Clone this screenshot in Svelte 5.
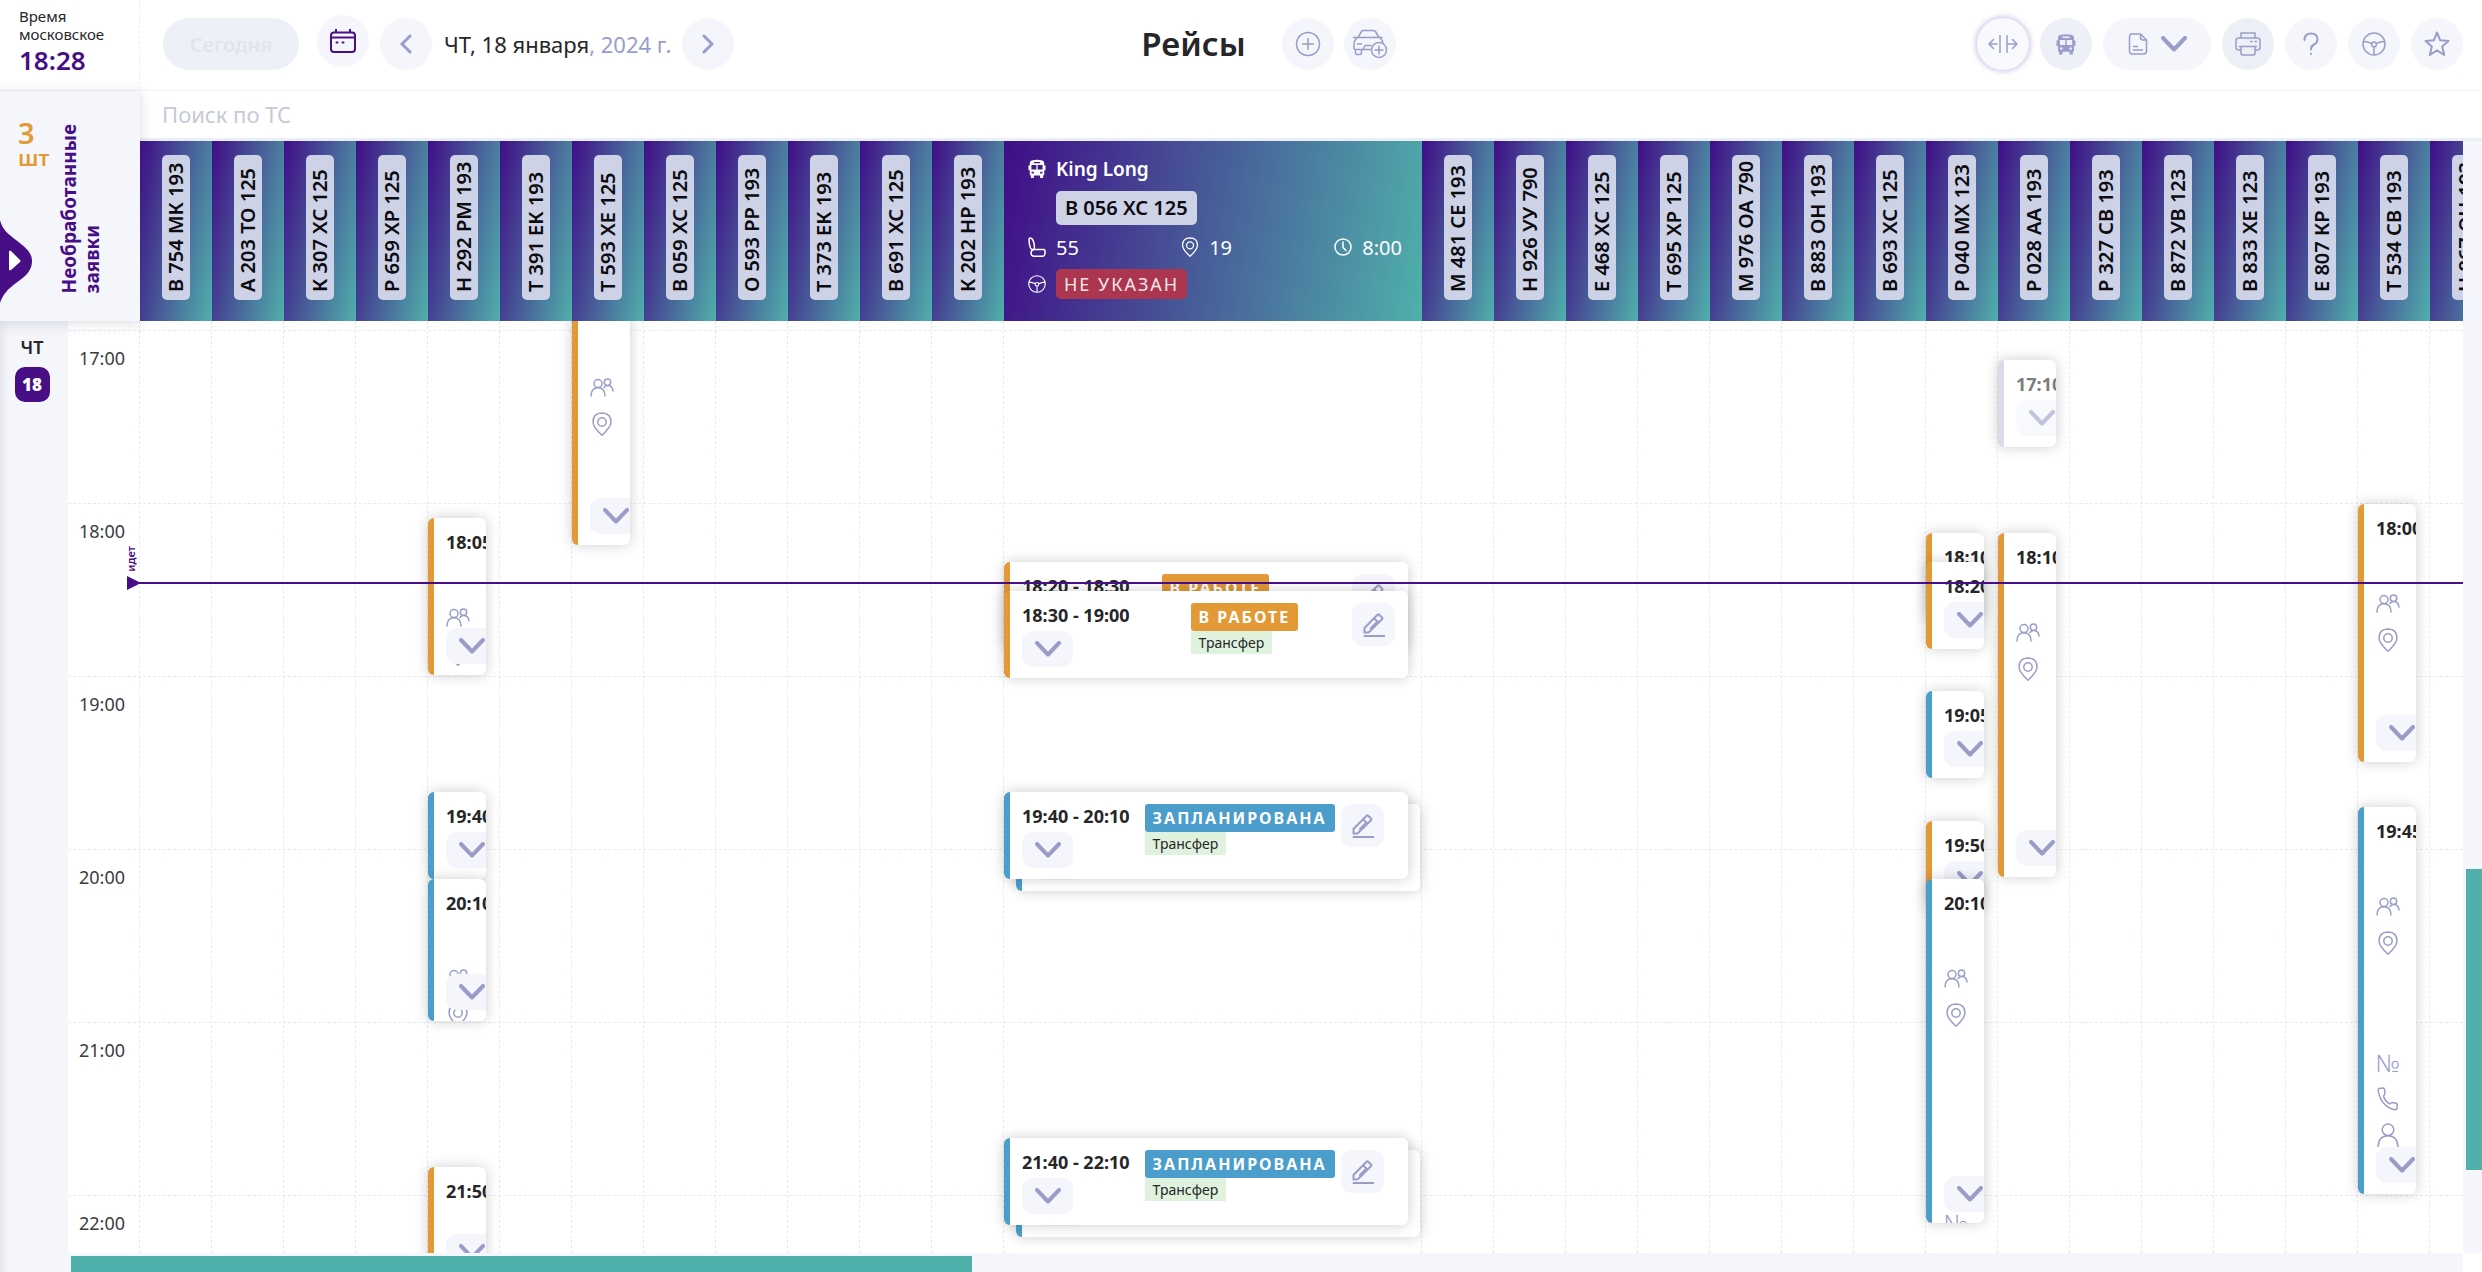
<script>
	const HOUR = 173;
	const FIRST_HOUR = 17;
	const OFFSET = 10;

	const hours = [17, 18, 19, 20, 21, 22];

	const vehicles = [
		{ plate: 'В 754 МК 193' },
		{ plate: 'А 203 ТО 125' },
		{ plate: 'К 307 ХС 125' },
		{ plate: 'Р 659 ХР 125' },
		{
			plate: 'Н 292 РМ 193',
			trips: [
				{ from: '18:05', to: '19:00', state: 'work', rows: ['people', 'pin'] },
				{ from: '19:40', to: '20:10', state: 'planned' },
				{ from: '20:10', to: '21:00', state: 'planned', rows: ['people', 'pin'] },
				{ from: '21:50', to: '22:30', state: 'work' }
			]
		},
		{ plate: 'Т 391 ЕК 193' },
		{
			plate: 'Т 593 ХЕ 125',
			trips: [{ from: '16:45', to: '18:15', state: 'work', rows: ['people', 'pin', 'number'], gap: 73 }]
		},
		{ plate: 'В 059 ХС 125' },
		{ plate: 'О 593 РР 193' },
		{ plate: 'Т 373 ЕК 193' },
		{ plate: 'В 691 ХС 125' },
		{ plate: 'К 202 НР 193' },
		{
			plate: 'В 056 ХС 125',
			open: true,
			model: 'King Long',
			seats: 55,
			stops: 19,
			hours: '8:00',
			trips: [
				{ from: '18:20', to: '18:30', state: 'work', lead: 32 },
				{ from: '18:30', to: '19:00', state: 'work', lead: 61 },
				{ from: '19:44', to: '20:14', state: 'planned', lead: 15, back: true },
				{ from: '19:40', to: '20:10', state: 'planned', lead: 15 },
				{ from: '21:44', to: '22:14', state: 'planned', lead: 15, back: true },
				{ from: '21:40', to: '22:10', state: 'planned', lead: 15 }
			]
		},
		{ plate: 'М 481 СЕ 193' },
		{ plate: 'Н 926 УУ 790' },
		{ plate: 'Е 468 ХС 125' },
		{ plate: 'Т 695 ХР 125' },
		{ plate: 'М 976 ОА 790' },
		{ plate: 'В 883 ОН 193' },
		{ plate: 'В 693 ХС 125' },
		{
			plate: 'Р 040 МХ 123',
			trips: [
				{ from: '18:10', to: '18:20', state: 'work' },
				{ from: '18:20', to: '18:50', state: 'work' },
				{ from: '19:05', to: '19:35', state: 'planned' },
				{ from: '19:50', to: '20:20', state: 'work' },
				{ from: '20:10', to: '22:10', state: 'planned', rows: ['people', 'pin', 'number'], gap: 184 }
			]
		},
		{
			plate: 'Р 028 АА 193',
			trips: [
				{ from: '17:10', to: '17:40', state: 'done' },
				{ from: '18:10', to: '20:10', state: 'work', rows: ['people', 'pin'] }
			]
		},
		{ plate: 'Р 327 СВ 193' },
		{ plate: 'В 872 УВ 123' },
		{ plate: 'В 833 ХЕ 123' },
		{ plate: 'Е 807 КР 193' },
		{
			plate: 'Т 534 СВ 193',
			trips: [
				{ from: '18:00', to: '19:30', state: 'work', rows: ['people', 'pin'] },
				{
					from: '19:45',
					to: '22:00',
					state: 'planned',
					rows: ['people', 'pin', 'number', 'phone', 'person'],
					gap: 96
				}
			]
		},
		{ plate: 'Н 867 ОН 193' }
	];

	const statuses = { work: 'В РАБОТЕ', planned: 'ЗАПЛАНИРОВАНА', done: 'ВЫПОЛНЕНА' };

	const icons = {
		calendar: {
			w: 26, h: 24,
			d: 'M4 3.5H22Q25 3.5 25 6.5V20Q25 23 22 23H4Q1 23 1 20V6.5Q1 3.5 4 3.5ZM1 8.5H25M6 .5V3.5M20 .5V3.5M6.5 13.5h1M12.5 13.5h1'
		},
		prev: { w: 12, h: 20, d: 'M10 2L2 10L10 18' },
		next: { w: 12, h: 20, d: 'M2 2L10 10L2 18' },
		plus: { w: 26, h: 26, d: 'M13 1.5a11.5 11.5 0 1 0 0 23a11.5 11.5 0 1 0 0-23M13 7.5v11M7.5 13h11' },
		car: {
			w: 36, h: 30,
			d: 'M6 8.5L9.5 2.5Q10.2 1.5 11.5 1.5H21.5Q22.8 1.5 23.5 2.5L27 8.5M1.5 8.5H30M5 9Q2 11.5 2 15V19.5Q2 20.5 3 20.5H11L12.5 17.5Q13 16.5 14 16.5H19M28 9Q30.5 11 31 13.5M3.5 20.5V23.5Q3.5 25.5 5.5 25.5H7.5Q9.5 25.5 9.5 23.5V20.5M5.5 15H9.5M27 13.5a7.5 7.5 0 1 0 0 15a7.5 7.5 0 1 0 0-15M27 17v8M23 21h8M11 20.5H19.5'
		},
		split: { w: 30, h: 18, d: 'M9 9H1M5.5 4.5L1 9L5.5 13.5M12 .5V17.5M19 .5V17.5M19 9H29M24.5 4.5L29 9L24.5 13.5' },
		bus: {
			w: 20, h: 21, fill: true,
			d: 'M4 1Q10-.6 16 1Q18 1.5 18 4V6.5H19.5V12H18V17.5H16.8V20.5H13.5V17.8H6.5V20.5H3.2V17.5H2V12H.5V6.5H2V4Q2 1.5 4 1ZM3.8 6V11H9.3V6ZM10.7 6V11H16.2V6ZM4 13.5V15.5H6.5V13.5ZM13.5 13.5V15.5H16V13.5ZM6.5 2.6V4H13.5V2.6Z'
		},
		doc: {
			w: 20, h: 22,
			d: 'M4 1H12.5L18.5 7V18Q18.5 21 15.5 21H4Q1.5 21 1.5 18V4Q1.5 1 4 1ZM12.5 1V4.5Q12.5 7 15 7H18.5M5.5 13.5H9.5M5.5 17H14.5'
		},
		chevron: { w: 26, h: 16, d: 'M2 2L13 13.5L24 2' },
		printer: {
			w: 26, h: 24,
			d: 'M6 6V1H20V6M5.5 18H3.5Q1 18 1 15.5V8.5Q1 6 3.5 6H22.5Q25 6 25 8.5V15.5Q25 18 22.5 18H20.5M4.5 14.5H21.5M6 14.5V21.5Q6 23 7.5 23H18.5Q20 23 20 21.5V14.5M15.5 9.5H17M20 9.5H21.5'
		},
		question: { w: 16, h: 24, d: 'M1.5 8Q1.5 1.5 8 1.5T14.5 7.5Q14.5 10.5 11 12.5Q8 14 8 17.5M8 21.7v.3' },
		wheel: {
			w: 24, h: 24,
			d: 'M12 1a11 11 0 1 0 0 22a11 11 0 1 0 0-22M12 10a2.4 2.4 0 1 0 0 4.8a2.4 2.4 0 1 0 0-4.8M1.5 9.5Q6 9.5 9.7 11.6M22.5 9.5Q18 9.5 14.3 11.6M12 14.8V23'
		},
		star: {
			w: 26, h: 26,
			d: 'M13 1.5L16.2 9.3L24.5 10L18.2 15.4L20.2 24L13 19.4L5.8 24L7.8 15.4L1.5 10L9.8 9.3Z'
		},
		people: {
			w: 24, h: 20,
			d: 'M8 1.5a4 4 0 1 0 0 8a4 4 0 1 0 0-8M1 18Q1.3 9.8 8 9.8T15 18M17.5 1a3.2 3.2 0 1 0 0 6.4a3.2 3.2 0 1 0 0-6.4M14 9.5Q15.5 7.5 17.5 7.5Q22.5 7.5 23 13'
		},
		pin: {
			w: 20, h: 24,
			d: 'M10 1Q19 1.3 19 10Q19 15 10 23.2Q1 15 1 10Q1 1.3 10 1ZM10 5.8a4.2 4.2 0 1 0 0 8.4a4.2 4.2 0 1 0 0-8.4'
		},
		phone: {
			w: 22, h: 24,
			d: 'M2 1.5L6 1Q7.5 1 7.5 2.5L8 6Q8 7.5 6.5 9Q8 14 12.5 17Q14 15.5 15.5 15.5L19.5 16.3Q20.5 16.8 20.3 18L19.8 21.5Q19.5 23 17.5 22.7Q11 21.5 6 15.5Q1.5 9 1.2 3Q1.2 1.8 2 1.5Z'
		},
		person: { w: 22, h: 24, d: 'M11 1a5.8 5.8 0 1 0 0 11.6a5.8 5.8 0 1 0 0-11.6M1 24Q1.5 12.8 11 12.8T21 24' },
		edit: {
			w: 22, h: 24,
			d: 'M1.5 19.5V15L14.5 1.7Q15.3 1 16.2 1.7L19 4.5Q19.8 5.3 19 6.2L6 19Q5.5 19.5 5 19.5ZM11 5.3L15.5 9.8M8 15L13 10M1.5 23H21.5'
		},
		seat: {
			w: 18, h: 20,
			d: 'M1 2Q1 1 2.5 1Q5 1.5 6 6.5Q7 11 5.5 12.5Q3.5 13 2.5 11Q1 7 1 2ZM6 12.5H16Q17.5 13 17 16L16.5 18Q16 19.2 15 19.2H6Q3 19 3 16Q3 13 6 12.5Z'
		},
		clock: { w: 18, h: 18, d: 'M9 1a8 8 0 1 0 0 16a8 8 0 1 0 0-16M9 4V9.5L12 12.5' }
	};

	let search = $state('');

	function minutes(time) {
		const [h, m] = time.split(':').map(Number);
		return h * 60 + m;
	}

	function top(time) {
		return Math.round(((minutes(time) - FIRST_HOUR * 60) * HOUR) / 60) + OFFSET;
	}

	function height(trip) {
		return Math.max(87, top(trip.to) - top(trip.from) - 2);
	}
</script>

{#snippet icon(name)}
	<svg
		class="icon icon-{name}"
		class:filled={icons[name].fill}
		width={icons[name].w}
		height={icons[name].h}
		viewBox="0 0 {icons[name].w} {icons[name].h}"
		aria-hidden="true"
	>
		<path d={icons[name].d} />
	</svg>
{/snippet}

<div class="page">
	<header class="topbar">
		<div class="clock">
			<span>Время московское</span>
			<strong>18:28</strong>
		</div>
		<nav class="dates">
			<button class="today" disabled>Сегодня</button>
			<button class="round calendar-button" aria-label="Календарь">{@render icon('calendar')}</button>
			<button class="round" aria-label="Назад">{@render icon('prev')}</button>
			<span class="date">ЧТ, 18 января<span class="year">, 2024 г.</span></span>
			<button class="round" aria-label="Вперед">{@render icon('next')}</button>
		</nav>
		<div class="heading">
			<h1>Рейсы</h1>
			<button class="round" aria-label="Добавить рейс">{@render icon('plus')}</button>
			<button class="round" aria-label="Добавить ТС">{@render icon('car')}</button>
		</div>
		<div class="tools">
			<button class="round ring" aria-label="Ширина колонок">{@render icon('split')}</button>
			<button class="round dark" aria-label="Транспорт">{@render icon('bus')}</button>
			<button class="round export" aria-label="Документы">
				{@render icon('doc')}
				{@render icon('chevron')}
			</button>
			<button class="round dark" aria-label="Печать">{@render icon('printer')}</button>
			<button class="round" aria-label="Помощь">{@render icon('question')}</button>
			<button class="round" aria-label="Водители">{@render icon('wheel')}</button>
			<button class="round" aria-label="Избранное">{@render icon('star')}</button>
		</div>
	</header>

	<section class="upper">
		<aside class="requests">
			<p class="count"><b>3</b>шт</p>
			<p class="caption">Необработанные<br />заявки</p>
			<button class="drawer" aria-label="Открыть заявки">
				<svg width="32" height="84" viewBox="0 0 32 84" aria-hidden="true">
					<path class="wave" d="M0 0C2 9 8 14 16 20C28 29 32 34 32 41C32 49 28 55 16 63C8 69 3 74 0 83Z" />
					<path class="arrow" d="M9 32Q9 30 11 31L20 40Q21 41 20 42L11 50Q9 51 9 49Z" />
				</svg>
			</button>
		</aside>
		<div class="fleet">
			<input class="search" type="text" aria-label="Поиск по ТС" placeholder="Поиск по ТС" bind:value={search} />
			<div class="vehicles">
				{#each vehicles as vehicle}
					{#if vehicle.open}
						<div class="vehicle open">
							<div class="line model">{@render icon('bus')}<span>{vehicle.model}</span></div>
							<div class="line"><span class="plate wide">{vehicle.plate}</span></div>
							<div class="line facts">
								<span class="fact">{@render icon('seat')}{vehicle.seats}</span>
								<span class="fact">{@render icon('pin')}{vehicle.stops}</span>
								<span class="fact">{@render icon('clock')}{vehicle.hours}</span>
							</div>
							<div class="line">{@render icon('wheel')}<span class="driver">НЕ УКАЗАН</span></div>
						</div>
					{:else}
						<div class="vehicle"><span class="plate">{vehicle.plate}</span></div>
					{/if}
				{/each}
			</div>
		</div>
	</section>

	<section class="schedule">
		<div class="day">
			<span>ЧТ</span>
			<b>18</b>
		</div>
		<div class="board">
			<div class="canvas">
				<ol class="hours">
					{#each hours as hour}
						<li>{hour}:00</li>
					{/each}
				</ol>
				<div class="columns">
					{#each vehicles as vehicle}
						<div class="column" class:open={vehicle.open}>
							{#each vehicle.trips ?? [] as trip}
								<article
									class="trip {trip.state}"
									class:back={trip.back}
									style="top: {top(trip.from)}px; height: {height(trip)}px"
								>
									<div class="trip-head">
										<span class="time">{trip.from} - {trip.to}</span>
										{#if vehicle.open}
											<div class="status" style="margin-left: {trip.lead}px">
												<span class="badge">{statuses[trip.state]}</span>
												<span class="kind">Трансфер</span>
											</div>
											<button class="edit-button" aria-label="Изменить">{@render icon('edit')}</button>
										{/if}
									</div>
									{#if trip.rows}
										<ul class="details">
											{#each trip.rows as row}
												<li style={row === 'number' ? `margin-top: ${trip.gap}px` : null}>
													{#if row === 'number'}
														<span class="number">№</span>
													{:else}
														{@render icon(row)}
													{/if}
												</li>
											{/each}
										</ul>
									{/if}
									<button class="more" aria-label="Подробнее">{@render icon('chevron')}</button>
								</article>
							{/each}
						</div>
					{/each}
				</div>
				<div class="now" style="top: {top('18:27')}px">
					<span>идет</span>
				</div>
			</div>
			<div class="track horizontal"><div class="thumb" style="width: 37.7%"></div></div>
		</div>
		<div class="track vertical"><div class="thumb" style="top: 58.8%; height: 32.3%"></div></div>
	</section>
</div>

<style>
	:global(body) {
		margin: 0;
	}

	.page {
		--purple: #480e86;
		--orange: #e39935;
		--blue: #4b9dcb;
		--teal: #4fb0ab;
		--icon: #999dc8;
		--soft: #f4f6fb;
		display: flex;
		flex-direction: column;
		height: 100vh;
		overflow: hidden;
		background: #fff;
		color: #262628;
		font-family: 'Noto Sans', sans-serif;
		font-size: 18px;
	}

	.page * {
		box-sizing: border-box;
	}

	button {
		padding: 0;
		border: 0;
		font: inherit;
		cursor: pointer;
	}

	h1,
	p,
	ol,
	ul {
		margin: 0;
		padding: 0;
		list-style: none;
	}

	.icon {
		flex: none;
		fill: none;
		stroke: currentColor;
		stroke-width: 1.5;
		stroke-linecap: round;
		stroke-linejoin: round;
	}

	.icon.filled {
		fill: currentColor;
		fill-rule: evenodd;
		stroke: none;
	}

	.icon-chevron {
		stroke-width: 4;
	}

	.icon-prev,
	.icon-next {
		stroke-width: 3;
	}

	.icon-star,
	.icon-question,
	.icon-edit,
	.icon-calendar {
		stroke-width: 2;
	}

	/* top bar */
	.topbar {
		display: flex;
		flex: none;
		align-items: center;
		height: 91px;
		padding-right: 19px;
		border-bottom: 1px solid #eff1f5;
	}

	.clock {
		display: flex;
		flex-direction: column;
		flex: none;
		align-self: stretch;
		width: 140px;
		padding: 7px 19px;
		border-right: 1px dashed #e9edf2;
		font-size: 15px;
		line-height: 18px;
	}

	.clock strong {
		color: var(--purple);
		font-size: 26px;
		font-weight: 600;
		line-height: 34px;
	}

	.dates,
	.heading,
	.tools {
		display: flex;
		align-items: center;
		height: 52px;
		margin-bottom: 2px;
	}

	.dates {
		flex: 7 0 auto;
		padding-left: 23px;
	}

	.heading {
		flex: 10 0 auto;
		gap: 10px;
	}

	.tools {
		gap: 11px;
	}

	.today {
		width: 136px;
		height: 52px;
		margin-right: 18px;
		border-radius: 26px;
		background: #edf0f6;
		color: #e1e5ee;
		font-size: 20px;
		font-weight: 600;
	}

	.round {
		display: flex;
		flex: none;
		align-items: center;
		justify-content: center;
		width: 52px;
		height: 52px;
		border-radius: 26px;
		background: var(--soft);
		color: var(--icon);
	}

	.round.dark {
		background: #edf0f7;
	}

	.ring {
		background: #f8f9fd;
		box-shadow: 0 0 5px 2px #d6cbe6;
	}

	.export {
		gap: 13px;
		width: 108px;
	}

	.calendar-button {
		margin: 0 11px 6px 0;
		color: var(--purple);
	}

	.date {
		margin: 0 11px 0 12px;
		font-size: 22px;
		white-space: nowrap;
	}

	.year {
		color: var(--icon);
	}

	h1 {
		margin-right: 26px;
		font-size: 33px;
		font-weight: 600;
		line-height: 48px;
	}

	/* requests block and vehicle strip */
	.upper {
		display: flex;
		flex: none;
	}

	.requests {
		display: flex;
		position: relative;
		z-index: 2;
		flex: none;
		width: 140px;
		padding: 28px 18px;
		background: var(--soft);
		box-shadow: 0 2px 12px rgba(60, 60, 90, 0.18);
	}

	.count {
		width: 40px;
		color: var(--orange);
		font-size: 22px;
		font-weight: 600;
		line-height: 20px;
	}

	.count b {
		display: block;
		font-size: 29px;
		font-weight: 600;
		line-height: 28px;
	}

	.caption {
		align-self: flex-end;
		color: var(--purple);
		font-size: 19px;
		font-weight: 700;
		line-height: 23px;
		white-space: nowrap;
		writing-mode: vertical-rl;
		transform: rotate(180deg);
	}

	.drawer {
		position: absolute;
		top: 129px;
		left: 0;
		height: 84px;
		background: none;
	}

	.wave {
		fill: var(--purple);
	}

	.arrow {
		fill: #fff;
	}

	.fleet {
		flex: 1;
		min-width: 0;
	}

	.search {
		display: block;
		width: 100%;
		height: 50px;
		padding: 0 22px 2px;
		border: 0;
		border-bottom: 3px solid #eaeef6;
		outline: none;
		background: #fff;
		font: inherit;
		font-size: 22px;
	}

	.search::placeholder {
		color: #c6cad8;
	}

	.vehicles {
		display: flex;
		height: 180px;
		overflow: hidden;
		border-right: 19px solid var(--soft);
	}

	.vehicle {
		flex: 0 0 72px;
		padding: 14px 22px 21px;
		background: linear-gradient(100deg, #400d87, #4fb0ab);
	}

	.plate {
		display: block;
		width: 28px;
		height: 145px;
		padding-top: 8px;
		border-radius: 5px;
		background: #cdd2e6;
		color: #0c0c10;
		font-size: 20px;
		font-weight: 600;
		line-height: 28px;
		white-space: nowrap;
		writing-mode: vertical-rl;
		transform: rotate(180deg);
	}

	.vehicle.open {
		display: flex;
		flex: 0 0 418px;
		flex-direction: column;
		gap: 8px;
		padding: 14px 20px 10px 24px;
		color: #fff;
		font-size: 20px;
	}

	.line {
		display: flex;
		align-items: center;
		gap: 10px;
		min-height: 28px;
	}

	.line .icon {
		width: 18px;
		height: 20px;
	}

	.model {
		font-weight: 600;
		font-size: 19px;
	}

	.plate.wide {
		width: auto;
		height: 34px;
		margin-left: 28px;
		padding: 0 9px;
		line-height: 34px;
		writing-mode: horizontal-tb;
		transform: none;
	}

	.facts {
		justify-content: space-between;
	}

	.fact {
		display: flex;
		align-items: center;
		gap: 10px;
	}

	.driver {
		padding: 0 8px;
		border-radius: 5px;
		background: #ac3650;
		color: #f9e6ea;
		font-size: 18px;
		letter-spacing: 2px;
		line-height: 30px;
	}

	/* schedule */
	.schedule {
		display: flex;
		flex: 1;
		min-height: 0;
	}

	.day {
		display: flex;
		flex: none;
		flex-direction: column;
		align-items: center;
		gap: 8px;
		width: 68px;
		padding: 14px 4px 0 0;
		background: linear-gradient(90deg, #e6e8ee, var(--soft) 9px);
		font-weight: 600;
	}

	.day b {
		width: 35px;
		border-radius: 10px;
		background: var(--purple);
		color: #fff;
		font-size: 17px;
		line-height: 35px;
		text-align: center;
	}

	.board {
		display: flex;
		flex: 1;
		flex-direction: column;
		min-width: 0;
	}

	.canvas {
		position: relative;
		flex: 1;
		min-height: 0;
		overflow: hidden;
	}

	.hours {
		padding-top: 9px;
	}

	.hours li {
		height: 173px;
		padding: 14px 11px;
		border-top: 1px dashed #e4ebee;
		color: #3c3c40;
		line-height: 26px;
	}

	.columns {
		display: flex;
		position: absolute;
		inset: 0 0 0 71px;
		border-left: 1px dashed #e4ebee;
	}

	.column {
		position: relative;
		flex: 0 0 72px;
		border-right: 1px dashed #e4ebee;
	}

	.column.open {
		flex-basis: 418px;
	}

	.trip {
		position: absolute;
		left: 0;
		width: 58px;
		padding: 12px 13px 0 12px;
		overflow: hidden;
		border-left: 6px solid var(--blue);
		border-radius: 6px;
		background: #fff;
		box-shadow: 0 0 14px rgba(0, 0, 0, 0.2);
	}

	.open .trip {
		width: 404px;
	}

	.trip.back {
		left: 12px;
	}

	.trip.work {
		border-color: var(--orange);
	}

	.trip.done {
		border-color: #dadcea;
	}

	.done .time,
	.done .more {
		opacity: 0.6;
	}

	.trip-head {
		display: flex;
		align-items: flex-start;
	}

	.open .planned .trip-head {
		padding-right: 11px;
	}

	.time {
		font-weight: 700;
		line-height: 24px;
		white-space: nowrap;
	}

	.status {
		display: flex;
		flex-direction: column;
		align-items: flex-start;
	}

	.badge {
		padding: 0 8px;
		border-radius: 3px;
		background: var(--blue);
		color: #fff;
		font-size: 16px;
		font-weight: 700;
		letter-spacing: 2px;
		line-height: 28px;
		white-space: nowrap;
	}

	.work .badge {
		background: var(--orange);
	}

	.kind {
		padding: 0 8px;
		background: #def2dd;
		font-size: 14px;
		line-height: 23px;
	}

	.edit-button {
		display: flex;
		align-items: center;
		justify-content: center;
		width: 43px;
		height: 43px;
		margin-left: auto;
		border-radius: 11px;
		background: var(--soft);
		color: var(--icon);
	}

	.details {
		padding-top: 52px;
		color: var(--icon);
	}

	.details li {
		display: flex;
		align-items: center;
		justify-content: center;
		width: 24px;
		height: 24px;
		margin-bottom: 12px;
	}

	.number {
		font-size: 24px;
		font-weight: 300;
		line-height: 24px;
	}

	.more {
		display: flex;
		position: absolute;
		bottom: 11px;
		left: 12px;
		align-items: center;
		justify-content: center;
		width: 51px;
		height: 36px;
		border-radius: 11px;
		background: var(--soft);
		color: var(--icon);
	}

	.now {
		position: absolute;
		right: 0;
		left: 67px;
		height: 2px;
		background: var(--purple);
	}

	.now::before {
		position: absolute;
		top: -6px;
		left: -8px;
		border: 7px solid transparent;
		border-right: 0;
		border-left: 14px solid var(--purple);
		content: '';
	}

	.now span {
		position: absolute;
		bottom: 12px;
		left: -11px;
		color: var(--purple);
		font-size: 11px;
		font-weight: 600;
		line-height: 14px;
		writing-mode: vertical-rl;
		transform: rotate(180deg);
	}

	.track {
		position: relative;
		flex: none;
		background: var(--soft);
	}

	.track.horizontal {
		height: 19px;
		padding: 3px 3px 0;
	}

	.track.vertical {
		width: 19px;
		margin-bottom: 19px;
	}

	.thumb {
		background: var(--teal);
	}

	.horizontal .thumb {
		height: 100%;
	}

	.vertical .thumb {
		position: absolute;
		right: 0;
		left: 3px;
	}
</style>
